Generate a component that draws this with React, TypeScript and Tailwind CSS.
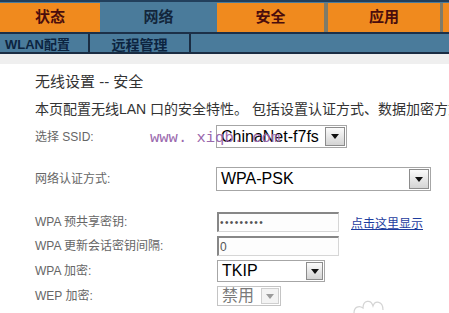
import React from "react";

const font = "font-['Liberation_Sans','Noto_Sans_CJK_SC',sans-serif]";

function Arrow({ disabled, w }: { disabled?: boolean; w: string }) {
  return (
    <span
      className={`flex h-full items-center justify-center border ${w} ${
        disabled
          ? "border-[#cfcfcf] bg-[#f3f3f3]"
          : "border-[#8c8c8c] bg-linear-to-b from-[#fbfbfb] to-[#d4d4d4]"
      }`}
    >
      <svg width="8" height="5" viewBox="0 0 8 5">
        <path d="M0 0h8L4 5z" fill={disabled ? "#9b9b9b" : "#111"} />
      </svg>
    </span>
  );
}

function FakeSelect({
  value,
  box,
  arrowW,
  disabled,
}: {
  value: string;
  box: string;
  arrowW: string;
  disabled?: boolean;
}) {
  return (
    <div className={`flex items-stretch border bg-white p-px ${box} ${disabled ? "border-[#c4c4c4]" : "border-[#a6a6a6]"}`}>
      <span
        className={`flex flex-1 items-center pl-[3px] text-[16px] leading-none ${
          disabled ? "text-[#7a7a7a]" : "text-black"
        }`}
      >
        {value}
      </span>
      <Arrow disabled={disabled} w={arrowW} />
    </div>
  );
}

function Label({ children }: { children: React.ReactNode }) {
  return <span className="w-[182px] shrink-0 text-[12px] text-[#666]">{children}</span>;
}

export default function App() {
  return (
    <div className={`relative h-[313px] w-[449px] overflow-hidden bg-white ${font}`}>
      {/* top menu */}
      <div className="flex h-[34px] border-t-2 border-b-2 border-t-[#223f5c] border-b-[#1c3048] bg-[#4a7b9b] pt-px">
        <div className="flex w-[100px] items-center justify-center bg-[#f08a1e] text-[15px] font-bold text-[#4a0d0d]">状态</div>
        <div className="flex w-[117px] items-center justify-center text-[15px] font-bold text-[#13263b]">网络</div>
        <div className="flex w-[107px] items-center justify-center bg-[#f08a1e] text-[15px] font-bold text-[#4a0d0d]">安全</div>
        <div className="w-[4px] bg-[#7f7b68]" />
        <div className="flex w-[112px] items-center justify-center bg-[#f08a1e] text-[15px] font-bold text-[#4a0d0d]">应用</div>
        <div className="w-[3px] bg-[#7f7b68]" />
        <div className="flex-1 bg-[#f08a1e]" />
      </div>

      {/* sub menu */}
      <div className="flex h-[20px] border-b-2 border-[#1a2c42] bg-[#4a7b9b] text-[13px] font-bold text-[#0c2440]">
        <div className="w-[88px] pl-[5px] pt-[4px] leading-[14px]">WLAN配置</div>
        <div className="w-[2px] bg-[#1a2c42]" />
        <div className="w-[99px] pt-[4px] text-center text-[14px] leading-[14px]">远程管理</div>
        <div className="w-[2px] bg-[#1a2c42]" />
      </div>
      <div className="h-[10px] bg-[#efefef]" />

      {/* content */}
      <div className="flex flex-col pl-[35px] pt-[8px]">
        <div className="text-[15px] leading-[20px] text-[#333]">无线设置 -- 安全</div>
        <div className="mt-[7px] whitespace-nowrap text-[14px] leading-[20px] text-[#333]">
          本页配置无线LAN 口的安全特性。 包括设置认证方式、数据加密方式，以及是否需要密钥。
        </div>

        <div className="relative mt-[6px] flex h-[23px] items-center">
          <Label>选择 SSID:</Label>
          <FakeSelect value="ChinaNet-f7fs" box="h-[23px] w-[131px] -ml-[1px]" arrowW="w-[20px]" />
          <span className="pointer-events-none absolute left-[115px] top-[4px] font-['Liberation_Mono',monospace] text-[15.5px] leading-[18px] text-[#9a68ad]">
            www. xiqb. com
          </span>
        </div>

        <div className="mt-[19px] flex h-[24px] items-center">
          <Label>网络认证方式:</Label>
          <FakeSelect value="WPA-PSK" box="h-[24px] w-[215px] -ml-[1px]" arrowW="w-[20px]" />
        </div>

        <div className="mt-[21px] flex h-[20px] items-center">
          <Label>WPA 预共享密钥:</Label>
          <div className="flex h-[20px] w-[122px] items-center border-t-2 border-l-2 border-r border-b border-t-[#878787] border-l-[#878787] border-r-[#d6d6d6] border-b-[#d6d6d6] bg-[#fdfdfd] pl-[1px]">
            <span className="text-[10px] leading-none tracking-[1.4px] text-[#555]">•••••••••</span>
          </div>
          <a className="ml-[12px] mt-[4px] text-[12px] text-[#1d3c9e] underline">点击这里显示</a>
        </div>

        <div className="mt-[4px] flex h-[20px] items-center">
          <Label>WPA 更新会话密钥间隔:</Label>
          <div className="flex h-[20px] w-[122px] items-center border-t-2 border-l-2 border-r border-b border-t-[#878787] border-l-[#878787] border-r-[#d6d6d6] border-b-[#d6d6d6] bg-[#fdfdfd] pl-[1px] text-[12px] text-[#555]">
            0
          </div>
        </div>

        <div className="mt-[4px] flex h-[22px] items-center">
          <Label>WPA 加密:</Label>
          <FakeSelect value="TKIP" box="h-[22px] w-[108px]" arrowW="w-[17px]" />
        </div>

        <div className="mt-[4px] flex h-[20px] items-center">
          <Label>WEP 加密:</Label>
          <FakeSelect value="禁用" box="h-[20px] w-[64px]" arrowW="w-[18px]" disabled />
        </div>
      </div>

      {/* faint doodle at bottom */}
      <svg className="pointer-events-none absolute left-[352px] top-[297px]" width="34" height="16" viewBox="0 0 34 16">
        <path
          d="M2 16 C2 10 7 8 11 11 C11 3 19 2 21 9 C23 3 31 4 31 13"
          stroke="#d4d4d4"
          strokeWidth="1.2"
          fill="none"
        />
      </svg>
    </div>
  );
}
